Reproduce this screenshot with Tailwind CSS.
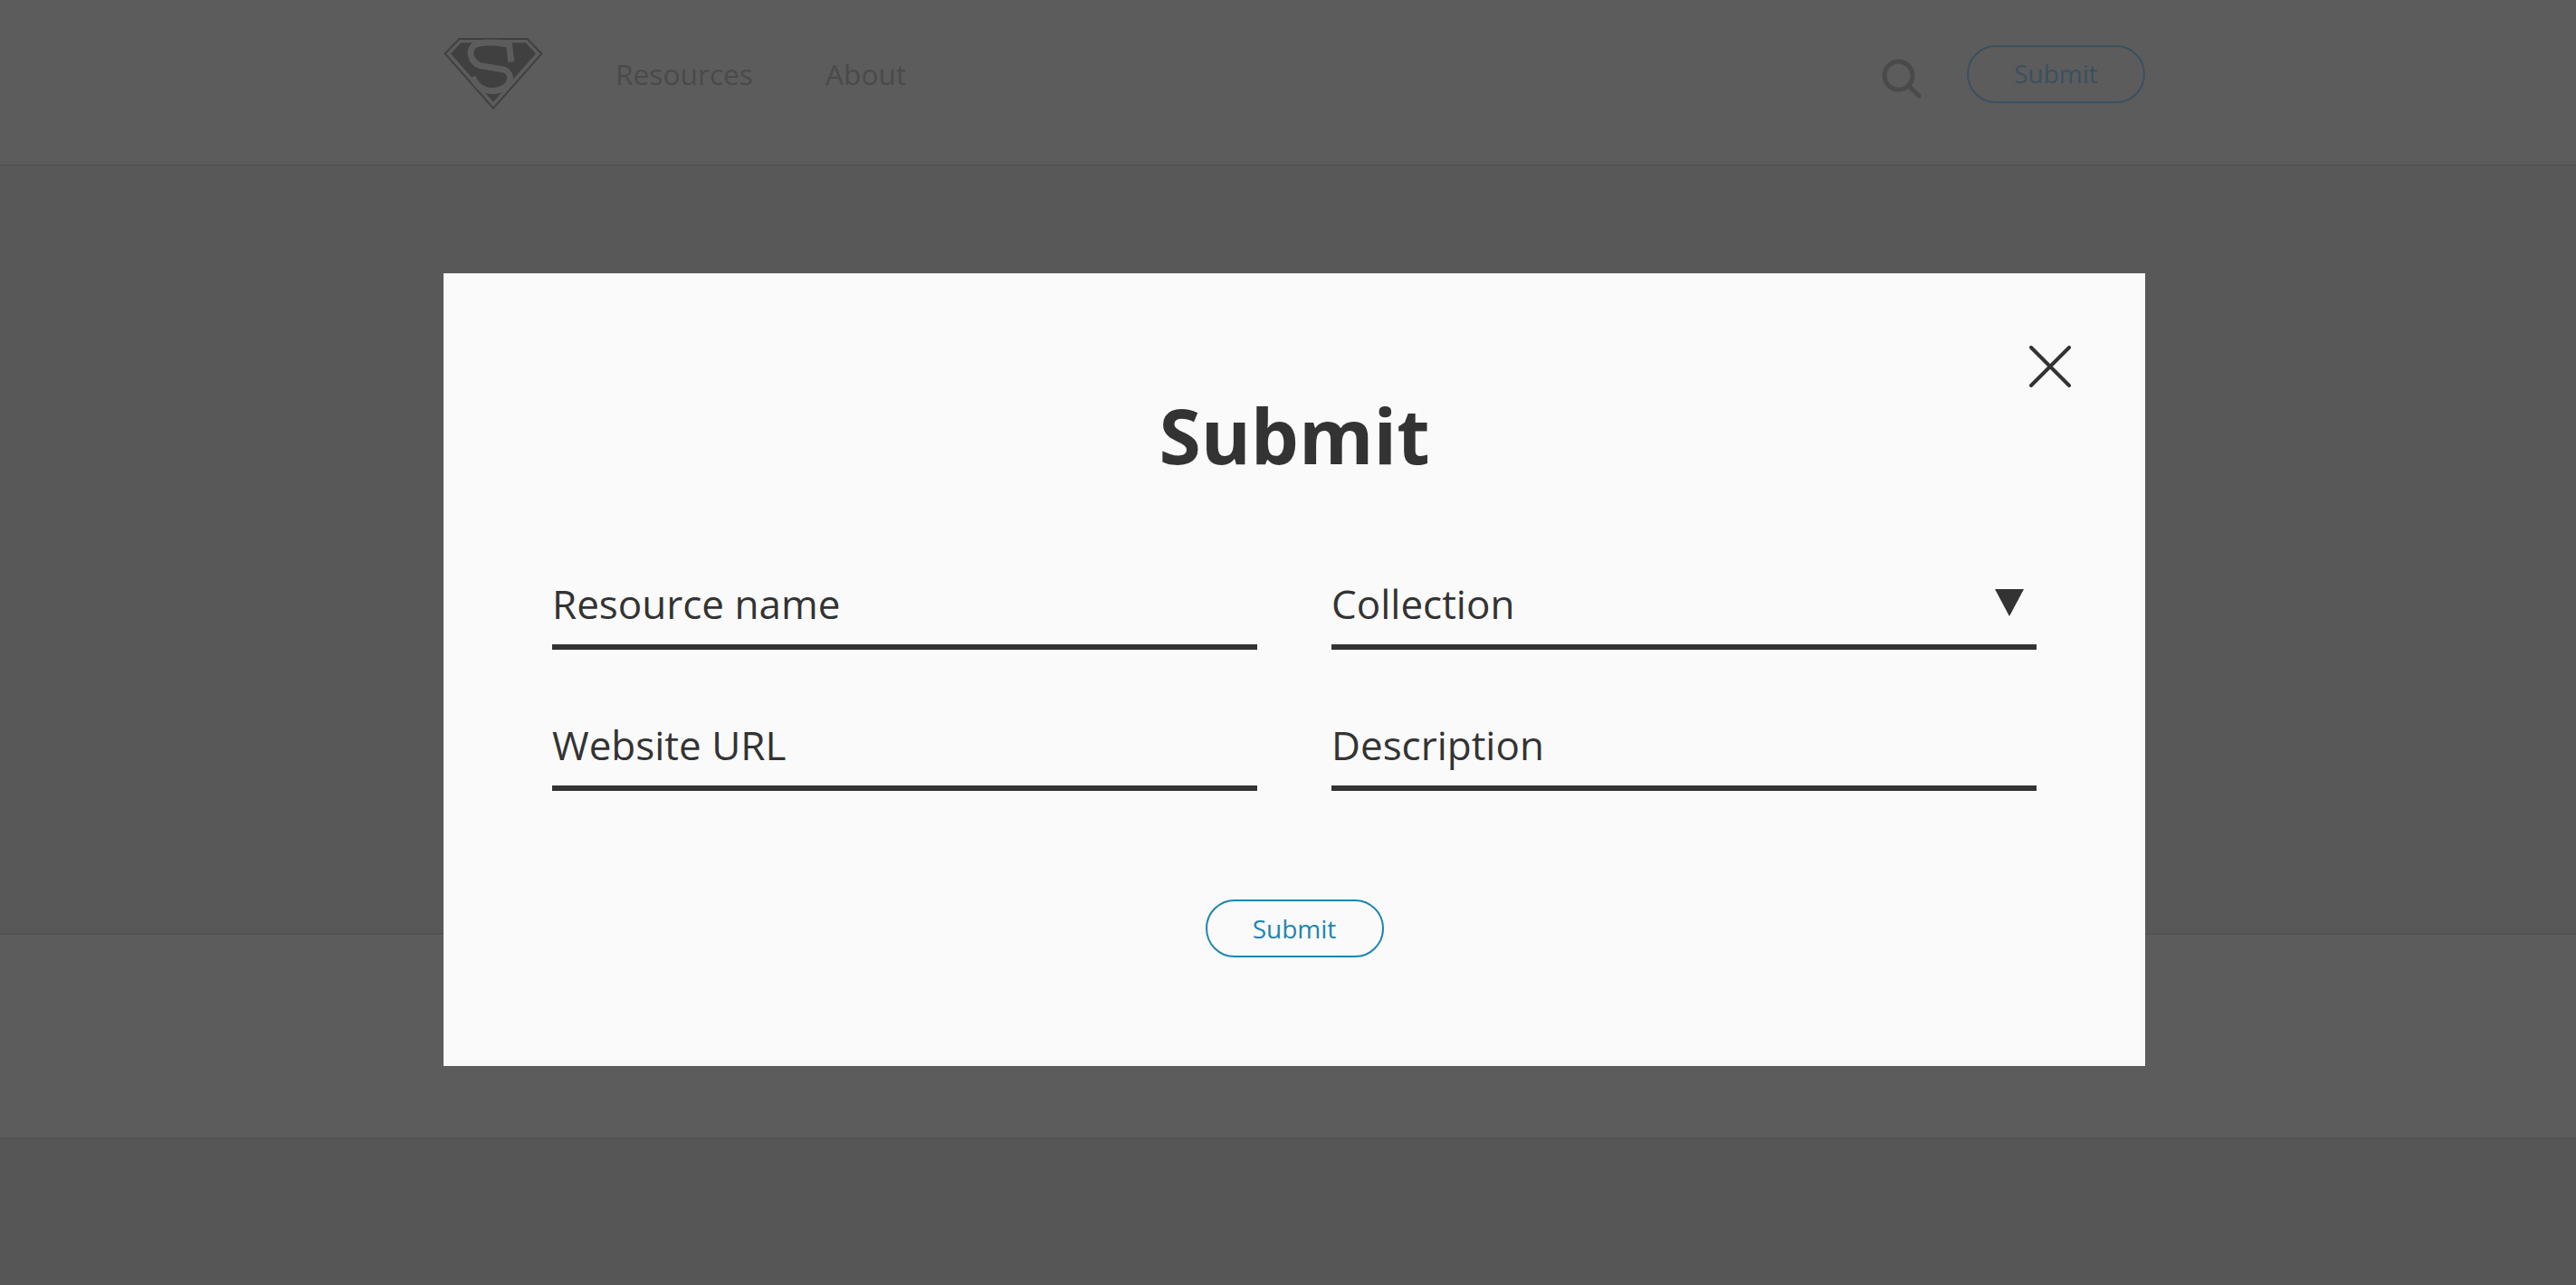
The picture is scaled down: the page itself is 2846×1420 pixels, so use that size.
<!DOCTYPE html>
<html lang="en">
<head>
    <meta charset="UTF-8">
    <title>Submit</title>
    <script src="https://cdn.jsdelivr.net/npm/@tailwindcss/browser@4"></script>
</head>
<body class="relative h-[1420px] overflow-hidden bg-[#565656] font-['Open_Sans',sans-serif]">
    <!-- Dimmed page behind the modal -->
    <header class="h-[183px] border-b border-[#505050] bg-[#5c5c5c] pl-[490px] pr-[476px]">
        <div class="flex h-full items-start">
            <svg class="mt-[42px] h-[80px] w-[110px]" viewBox="30 21 330 240">
                <path d="M82 24H308L355 73L195 254L35 73Z" fill="none" stroke="#404040" stroke-width="6"/>
                <path d="M88 37H302L336 73L195 233L54 73Z" fill="#404040"/>
                <path d="M254 100L248 44C210 32 150 34 130 46C110 68 122 100 150 112L232 126C262 142 258 182 208 195C172 202 140 186 126 150" fill="none" stroke="#5c5c5c" stroke-width="21"/>
            </svg>
            <nav class="ml-[80px] mt-[60px] flex gap-[80px] text-[31.7px] leading-[44px] text-[#4a4a4a]">
                <a>Resources</a>
                <a>About</a>
            </nav>
            <div class="ml-auto flex items-center">
                <svg class="mt-[60px] h-[44px] w-[44px]" viewBox="0 0 44 44" fill="none" stroke="#4a4a4a">
                    <circle cx="18.500" cy="18.500" r="15.500" stroke-width="5"/>
                    <path d="M30 30L41 41" stroke-width="5" stroke-linecap="round"/>
                </svg>
                <button class="ml-[50px] mt-[50px] h-[64px] w-[197px] rounded-full border-2 border-[#3a5060] pb-[2px] text-[28px] text-[#3a5060]">Submit</button>
            </div>
        </div>
    </header>
    <main class="h-[850px] border-b-2 border-[#525252] bg-[#585858]"></main>
    <section class="h-[226px] border-b-2 border-[#525252] bg-[#5c5c5c]"></section>

    <!-- Modal -->
    <div class="absolute inset-0 pl-[490px] pt-[302px]">
        <div class="relative h-[876px] w-[1880px] bg-[#fafafa] px-[120px] pt-[122px] text-[#333333]">
            <button class="absolute right-[82px] top-[80px]">
                <svg class="block h-[46px] w-[46px]" viewBox="0 0 46 46" stroke="#333333" stroke-width="4" stroke-linecap="round">
                    <path d="M2 2L44 44M44 2L2 44"/>
                </svg>
            </button>
            <h1 class="text-center text-[84px] font-bold leading-[114px]">Submit</h1>
            <form class="mt-[100px] grid grid-cols-[779px_779px] gap-x-[82px] gap-y-[76px] text-[44px]">
                <div class="h-[80px] border-b-[6px] border-[#333333] leading-[58px]">Resource name</div>
                <div class="relative h-[80px] border-b-[6px] border-[#333333] leading-[58px]">
                    Collection
                    <svg class="absolute right-[14px] top-[13px] h-[30px] w-[32px]" viewBox="0 0 32 30"><path d="M0 0H32L16 30Z" fill="#333333"/></svg>
                </div>
                <div class="h-[80px] border-b-[6px] border-[#333333] leading-[58px]">Website URL</div>
                <div class="h-[80px] border-b-[6px] border-[#333333] leading-[58px]">Description</div>
            </form>
            <div class="mt-[120px] flex justify-center">
                <button class="h-[64px] w-[197px] rounded-full border-2 border-[#1f84b0] pb-[1px] text-[28px] text-[#1f84b0]">Submit</button>
            </div>
        </div>
    </div>
</body>
</html>
